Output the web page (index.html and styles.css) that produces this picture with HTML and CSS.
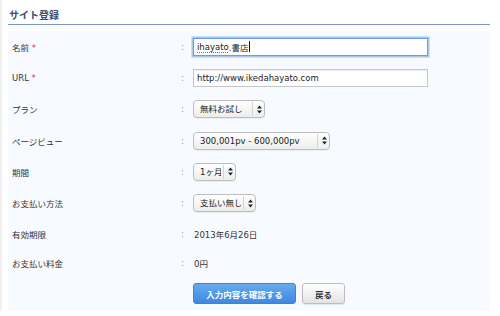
FILE: index.html
```html
<!DOCTYPE html>
<html lang="ja">
<head>
<meta charset="utf-8">
<title>サイト登録</title>
<link rel="stylesheet" href="styles.css">
</head>
<body>
<div class="page">
  <h2 class="title">サイト登録</h2>
  <form class="panel">
    <div class="row">
      <div class="label">名前 <span class="req">*</span></div>
      <div class="colon">:</div>
      <div class="value"><div class="field focus"><span class="typo">ihayato</span>.書店<span class="caret"></span></div></div>
    </div>
    <div class="row">
      <div class="label">URL <span class="req">*</span></div>
      <div class="colon">:</div>
      <div class="value"><div class="field">http://www.ikedahayato.com</div></div>
    </div>
    <div class="row">
      <div class="label">プラン</div>
      <div class="colon">:</div>
      <div class="value"><span class="sel"><select class="w-plan"><option>無料お試し</option></select><span class="arrows"><svg width="5" height="9" viewBox="0 0 5 9"><polygon points="0,3.6 2.5,0.4 5,3.6" fill="#222"/><polygon points="0,5.4 2.5,8.6 5,5.4" fill="#222"/></svg></span></span></div>
    </div>
    <div class="row">
      <div class="label">ページビュー</div>
      <div class="colon">:</div>
      <div class="value"><span class="sel"><select class="w-pv"><option>300,001pv - 600,000pv</option></select><span class="arrows"><svg width="5" height="9" viewBox="0 0 5 9"><polygon points="0,3.6 2.5,0.4 5,3.6" fill="#222"/><polygon points="0,5.4 2.5,8.6 5,5.4" fill="#222"/></svg></span></span></div>
    </div>
    <div class="row">
      <div class="label">期間</div>
      <div class="colon">:</div>
      <div class="value"><span class="sel"><select class="w-term"><option>1ヶ月</option></select><span class="arrows"><svg width="5" height="9" viewBox="0 0 5 9"><polygon points="0,3.6 2.5,0.4 5,3.6" fill="#222"/><polygon points="0,5.4 2.5,8.6 5,5.4" fill="#222"/></svg></span></span></div>
    </div>
    <div class="row">
      <div class="label">お支払い方法</div>
      <div class="colon">:</div>
      <div class="value"><span class="sel"><select class="w-pay"><option>支払い無し</option></select><span class="arrows"><svg width="5" height="9" viewBox="0 0 5 9"><polygon points="0,3.6 2.5,0.4 5,3.6" fill="#222"/><polygon points="0,5.4 2.5,8.6 5,5.4" fill="#222"/></svg></span></span></div>
    </div>
    <div class="row">
      <div class="label">有効期限</div>
      <div class="colon">:</div>
      <div class="value text">2013年6月26日</div>
    </div>
    <div class="row short">
      <div class="label">お支払い料金</div>
      <div class="colon">:</div>
      <div class="value text">0円</div>
    </div>
    <div class="row buttons">
      <div></div>
      <div></div>
      <div class="value btns">
        <button type="button" class="btn primary">入力内容を確認する</button>
        <button type="button" class="btn back">戻る</button>
      </div>
    </div>
  </form>
</div>
</body>
</html>
```

FILE: styles.css
```css
html, body {
  margin: 0;
  padding: 0;
  background: #fff;
}
body {
  font-family: "DejaVu Sans", "Noto Sans CJK JP", sans-serif;
  font-size: 8.5px;
  color: #333;
}
.page {
  border-left: 2px solid #f1f1f1;
  padding-left: 6px;
  width: 482px;
}
.title {
  margin: 0;
  box-sizing: border-box;
  height: 25px;
  padding: 6px 0 0 1px;
  line-height: 18px;
  font-family: "Noto Sans CJK JP", sans-serif;
  font-size: 10px;
  font-weight: bold;
  color: #3b4d72;
  border-bottom: 1px solid #7f97c4;
}
.panel {
  margin: 6px 0 0;
  background: #f7fbff;
  padding-bottom: 7px;
}
.row {
  display: grid;
  grid-template-columns: 173px 12px 1fr;
  align-items: center;
  height: 31.3px;
}
.row.short {
  height: 25px;
}
.row.buttons {
  height: auto;
  padding-top: 8px;
}
.label {
  padding-left: 4px;
  font-family: "DejaVu Sans", "Noto Sans CJK JP", sans-serif;
}
.req {
  color: #d33;
}
.colon {
  color: #999;
}
.text {
  padding-left: 1px;
}
.field {
  box-sizing: border-box;
  width: 235px;
  height: 18px;
  border: 1px solid #c6c6c6;
  background: #fff;
  padding: 0 3px;
  display: flex;
  align-items: center;
  box-shadow: inset 0 1px 1px rgba(0, 0, 0, 0.07);
  color: #222;
}
.field.focus {
  border-color: #6d9de0;
  box-shadow: 0 0 0 1.5px #a8c6ee;
}
.typo {
  text-decoration: underline dotted #e04040;
  text-underline-offset: 2px;
}
.caret {
  display: inline-block;
  width: 1px;
  height: 11px;
  background: #111;
  margin-left: 1px;
}
.sel {
  position: relative;
  display: inline-block;
  vertical-align: middle;
}
.sel select {
  appearance: none;
  -webkit-appearance: none;
  box-sizing: border-box;
  height: 18px;
  margin: 0;
  padding: 0 14px 0 6px;
  border: 1px solid #bdbdbd;
  border-radius: 4px;
  background: linear-gradient(#ffffff, #ededed);
  font-family: "DejaVu Sans", "Noto Sans CJK JP", sans-serif;
  font-size: 8.5px;
  color: #222;
  box-shadow: 0 1px 0 rgba(0, 0, 0, 0.05);
  display: block;
}
.w-plan { width: 72px; }
.w-pv { width: 137px; }
.w-term { width: 43px; }
.w-pay { width: 63px; }
.arrows {
  position: absolute;
  right: 0;
  top: 2px;
  bottom: 2px;
  width: 12px;
  border-left: 1px solid #d3d3d3;
  display: flex;
  align-items: center;
  justify-content: center;
  pointer-events: none;
}
.btns {
  display: flex;
  gap: 6px;
}
.btn {
  box-sizing: border-box;
  height: 21px;
  margin: 0;
  padding: 0;
  border-radius: 3px;
  font-family: "Noto Sans CJK JP", sans-serif;
  font-size: 8.5px;
  font-weight: bold;
}
.btn.primary {
  width: 103px;
  border: 1px solid #3d82d8;
  background: linear-gradient(#66abef, #3f88df);
  color: #fff;
}
.btn.back {
  width: 43px;
  border: 1px solid #bdbdbd;
  background: linear-gradient(#ffffff, #e3e3e3);
  color: #333;
  box-shadow: 0 1px 1px rgba(0, 0, 0, 0.08);
}
```
